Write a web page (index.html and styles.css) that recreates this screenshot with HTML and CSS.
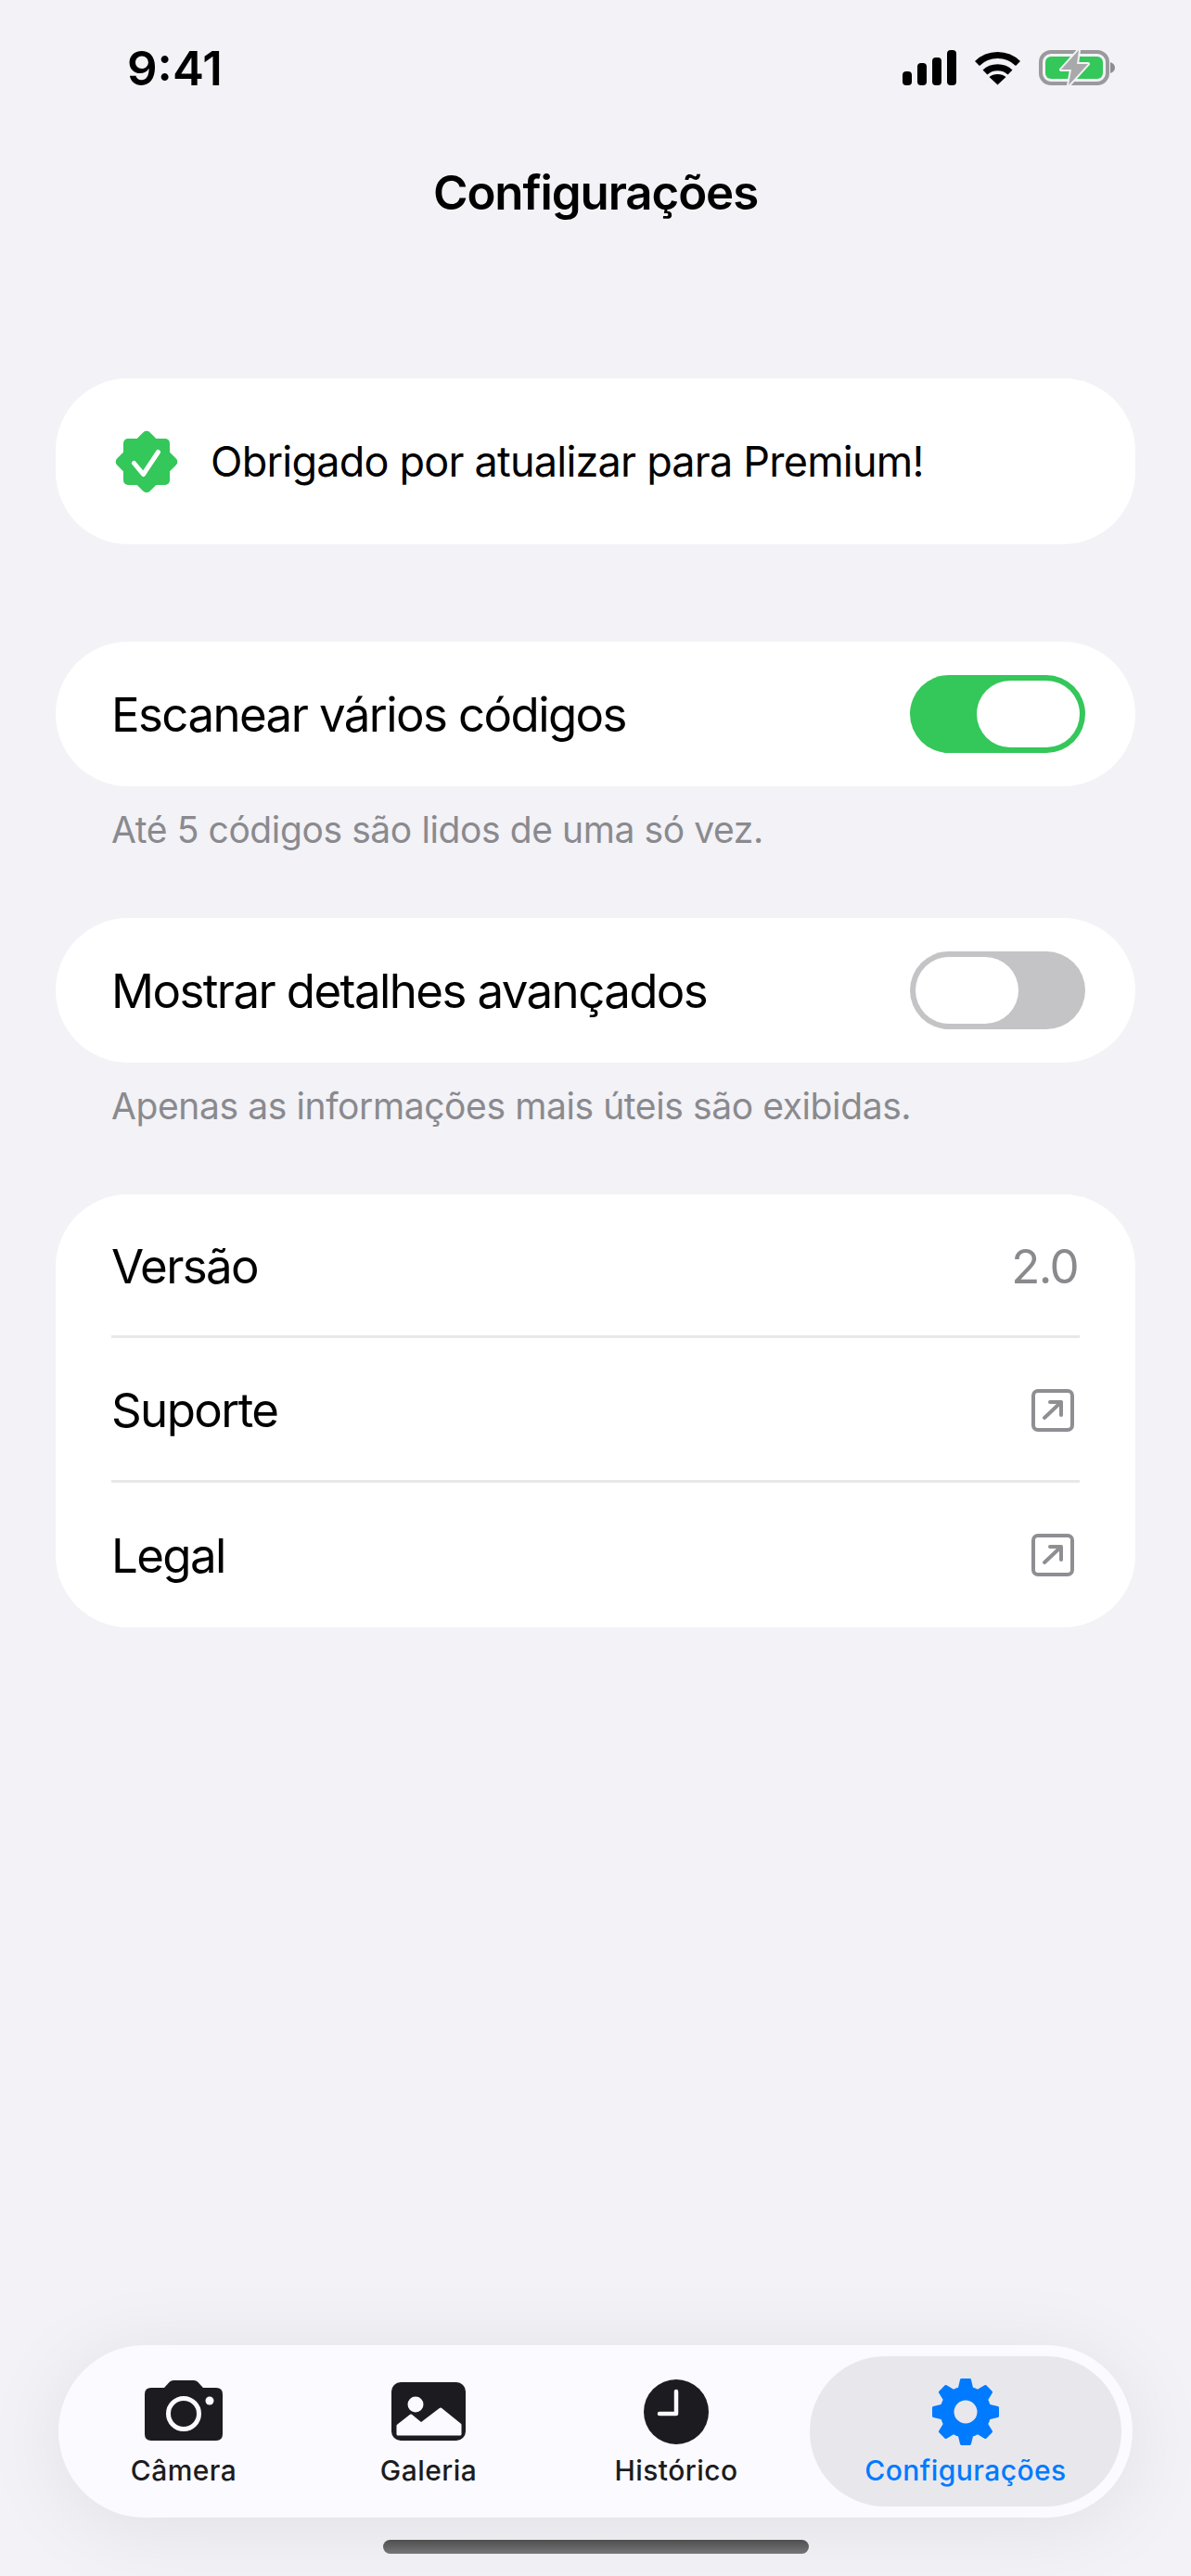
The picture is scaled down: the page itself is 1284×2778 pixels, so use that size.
FILE: index.html
```html
<!DOCTYPE html>
<html lang="pt-BR">
<head>
  <meta charset="UTF-8">
  <title>Configurações</title>
  <link rel="stylesheet" href="styles.css">
</head>
<body>
  <div class="page">
    <header class="status-bar">
      <span class="time">9:41</span>
      <div class="status-icons">
        <svg class="signal" width="58" height="38" viewBox="0 0 58 38">
          <rect x="0" y="23" width="10" height="15" rx="4"/>
          <rect x="16" y="14" width="10" height="24" rx="4"/>
          <rect x="32" y="8" width="10" height="30" rx="4"/>
          <rect x="48" y="0" width="10" height="38" rx="4"/>
        </svg>
        <svg class="wifi" width="51" height="38" viewBox="0 0 51 38">
          <path d="M3.500 14.500C15.500 2.500 35.500 2.500 47.500 14.500" fill="none" stroke="#000" stroke-width="7"/>
          <path d="M12 24C19 17 32 17 39 24" fill="none" stroke="#000" stroke-width="7"/>
          <path d="M25.500 37.500L16.500 29C21 25 30 25 34.500 29Z"/>
        </svg>
        <svg class="battery" width="82" height="40" viewBox="0 0 82 40">
          <rect x="2" y="3" width="72" height="34" rx="11" fill="none" stroke="#9a9a9c" stroke-width="4"/>
          <rect x="7" y="8" width="62" height="24" rx="6" fill="#34c759"/>
          <path d="M77 14c3 1 5 3 5 6s-2 5-5 6z" fill="#8e8e90"/>
          <path d="M43 1L24 22H35L32 39L53 16H41Z" fill="#a9a9ab" stroke="#f2f2f7" stroke-width="4" stroke-linejoin="round" paint-order="stroke"/>
        </svg>
      </div>
    </header>

    <h1 class="title">Configurações</h1>

    <main class="settings">
      <section class="card premium">
        <svg class="badge" width="70" height="70" viewBox="-35 -35 70 70">
          <rect x="-25" y="-25" width="50" height="50" rx="5" fill="#34c759"/>
          <rect x="-25" y="-25" width="50" height="50" rx="5" fill="#34c759" transform="rotate(45)"/>
          <path d="M-13.500 1.500L-3.500 13.500L12.500 -10.500" fill="none" stroke="#fff" stroke-width="5" stroke-linecap="round" stroke-linejoin="round"/>
        </svg>
        <span>Obrigado por atualizar para Premium!</span>
      </section>

      <section class="card toggle-row">
        <span>Escanear vários códigos</span>
        <div class="switch on"><div class="thumb"></div></div>
      </section>
      <p class="hint">Até 5 códigos são lidos de uma só vez.</p>

      <section class="card toggle-row">
        <span>Mostrar detalhes avançados</span>
        <div class="switch"><div class="thumb"></div></div>
      </section>
      <p class="hint">Apenas as informações mais úteis são exibidas.</p>

      <section class="card list">
        <div class="list-row first">
          <span>Versão</span>
          <span class="version">2.0</span>
        </div>
        <div class="list-row">
          <span>Suporte</span>
          <svg class="open-icon" width="46" height="46" viewBox="0 0 46 46">
            <rect x="2" y="2" width="42" height="42" rx="5"/>
            <path d="M14 31L32 14M20 14H32V28"/>
          </svg>
        </div>
        <div class="list-row last">
          <span>Legal</span>
          <svg class="open-icon" width="46" height="46" viewBox="0 0 46 46">
            <rect x="2" y="2" width="42" height="42" rx="5"/>
            <path d="M14 31L32 14M20 14H32V28"/>
          </svg>
        </div>
      </section>
    </main>

    <nav class="tab-bar">
      <div class="tab">
        <svg width="84" height="72" viewBox="0 0 84 72">
          <path d="M7 10H21L27 3.500Q28.500 2 31 2H53Q55.500 2 57 3.500L63 10H77Q84 10 84 17V60Q84 67 77 67H7Q0 67 0 60V17Q0 10 7 10Z" fill="#1c1c20"/>
          <circle cx="42" cy="38" r="16.500" fill="none" stroke="#fafaff" stroke-width="5"/>
          <circle cx="70" cy="24" r="4.500" fill="#fafaff"/>
        </svg>
        <span class="tab-label">Câmera</span>
      </div>
      <div class="tab gallery">
        <svg width="80" height="72" viewBox="0 0 80 72">
          <rect x="0" y="4" width="80" height="63" rx="10" fill="#1c1c20"/>
          <ellipse cx="26" cy="28" rx="8.500" ry="8.500" fill="#fafaff"/>
          <path d="M7 51L21 40L32 49L53 33L74 50V60H7Z" fill="#fafaff" stroke="#fafaff" stroke-width="3" stroke-linejoin="round"/>
        </svg>
        <span class="tab-label">Galeria</span>
      </div>
      <div class="tab history">
        <svg width="70" height="72" viewBox="0 0 70 72">
          <circle cx="35" cy="36" r="35" fill="#1c1c20"/>
          <path d="M35 14V38H17" fill="none" stroke="#fafaff" stroke-width="4.500" stroke-linecap="round" stroke-linejoin="round"/>
        </svg>
        <span class="tab-label">Histórico</span>
      </div>
      <div class="tab active">
        <svg width="72" height="72" viewBox="-36 -36 72 72">
          <circle r="20" fill="none" stroke="#007aff" stroke-width="15"/>
          <g fill="#007aff" stroke="#007aff" stroke-width="3" stroke-linejoin="round">
            <path d="M-4.500 -34.500H4.500L7 -24H-7Z"/>
            <path d="M-4.500 -34.500H4.500L7 -24H-7Z" transform="rotate(45)"/>
            <path d="M-4.500 -34.500H4.500L7 -24H-7Z" transform="rotate(90)"/>
            <path d="M-4.500 -34.500H4.500L7 -24H-7Z" transform="rotate(135)"/>
            <path d="M-4.500 -34.500H4.500L7 -24H-7Z" transform="rotate(180)"/>
            <path d="M-4.500 -34.500H4.500L7 -24H-7Z" transform="rotate(225)"/>
            <path d="M-4.500 -34.500H4.500L7 -24H-7Z" transform="rotate(270)"/>
            <path d="M-4.500 -34.500H4.500L7 -24H-7Z" transform="rotate(315)"/>
          </g>
        </svg>
        <span class="tab-label">Configurações</span>
      </div>
    </nav>

    <div class="home-indicator"></div>
  </div>
</body>
</html>
```

FILE: styles.css
```css
* {
  box-sizing: border-box;
}
body {
  margin: 0;
  background-color: #f2f2f7;
  font-family: Inter, "Liberation Sans", sans-serif;
  color: #000;
}
.page {
  width: 1284px;
  height: 2778px;
  display: flex;
  flex-direction: column;
  overflow: hidden;
}
.status-bar {
  height: 146px;
  padding: 0 82px 0 137px;
  display: flex;
  justify-content: space-between;
  align-items: center;
}
.time {
  font-size: 51px;
  font-weight: 600;
}
.status-icons {
  display: flex;
  align-items: center;
  gap: 19px;
}
.title {
  margin: 0;
  height: 124px;
  line-height: 124px;
  text-align: center;
  font-size: 51px;
  font-weight: 600;
  letter-spacing: -1.1px;
}
.settings {
  margin: 138px 60px 0;
}
.card {
  background-color: #fff;
  border-radius: 78px;
  font-size: 51px;
  letter-spacing: -1.6px;
}
.premium {
  height: 179px;
  margin-bottom: 105px;
  padding-left: 63px;
  display: flex;
  align-items: center;
  gap: 34px;
  font-size: 45px;
  letter-spacing: -0.78px;
}
.toggle-row {
  height: 156px;
  padding: 0 54px 0 60px;
  display: flex;
  justify-content: space-between;
  align-items: center;
}
.switch {
  width: 189px;
  height: 84px;
  padding: 6px;
  border-radius: 42px;
  background-color: #c4c4c6;
  display: flex;
}
.switch.on {
  background-color: #34c759;
  justify-content: flex-end;
}
.thumb {
  width: 111px;
  height: 72px;
  border-radius: 36px;
  background-color: #fff;
}
.hint {
  margin: 0 0 48px;
  padding-left: 60px;
  line-height: 94px;
  font-size: 39px;
  letter-spacing: -0.4px;
  color: #8a8a8e;
}
.list {
  height: 467px;
  padding: 0 60px;
}
.list-row {
  height: 156px;
  padding-top: 2px;
  display: flex;
  justify-content: space-between;
  align-items: center;
  border-bottom: 3px solid #e8e8ea;
}
.list-row.first {
  height: 155px;
}
.list-row.last {
  padding-top: 0;
  border-bottom: none;
}
.version {
  margin-right: 2px;
  color: #8a8a8e;
}
.open-icon {
  margin-right: 6px;
  fill: none;
  stroke: #8e8e93;
  stroke-width: 4;
  stroke-linecap: round;
  stroke-linejoin: round;
}
.tab-bar {
  margin: auto 63px 0;
  height: 186px;
  padding: 12px 12px 12px 2px;
  border-radius: 93px;
  background-color: #fafaff;
  box-shadow: 0 10px 90px rgba(0, 0, 0, 0.08);
  display: flex;
}
.tab {
  flex: 0 0 266px;
  height: 162px;
  padding-top: 24px;
  display: flex;
  flex-direction: column;
  align-items: center;
}
.tab.gallery {
  flex-basis: 262px;
}
.tab.history {
  flex-basis: 272px;
}
.tab.active {
  flex: 0 0 336px;
  margin-left: auto;
  border-radius: 81px;
  background-color: #e8e8ec;
}
.tab-label {
  margin-top: 9px;
  line-height: 36px;
  font-size: 30px;
  font-weight: 500;
  letter-spacing: 0.45px;
  color: #1c1c20;
}
.active .tab-label {
  color: #007aff;
}
.home-indicator {
  width: 459px;
  height: 15px;
  margin: 24px auto 24px;
  border-radius: 8px;
  background: linear-gradient(#4f4f50, #757577);
}
```
